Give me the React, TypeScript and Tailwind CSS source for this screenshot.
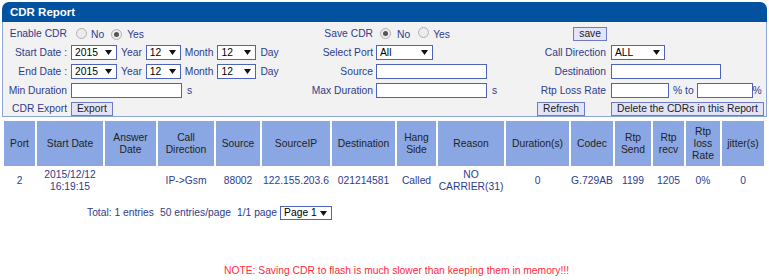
import React from "react";

const Arrow = () => (
    <svg width="7" height="5" viewBox="0 0 7 5" className="shrink-0">
        <path d="M0 0 L7 0 L3.5 5 Z" fill="#111" />
    </svg>
);

const Select = ({ value, className }: { value: string; className: string }) => (
    <div
        className={
            "inline-flex h-[15px] items-center justify-between border border-[#4f63b8] bg-white pl-[3px] pr-[4px] text-black " +
            className
        }
    >
        <span>{value}</span>
        <Arrow />
    </div>
);

const Input = ({ className }: { className: string }) => (
    <div className={"h-[15px] border border-[#4f63b8] bg-white " + className} />
);

const Radio = ({ checked }: { checked?: boolean }) => (
    <span className="inline-flex h-[11px] w-[11px] items-center justify-center rounded-full border border-[#b0b0b0] bg-[#ececec]">
        {checked && <span className="h-[5px] w-[5px] rounded-full bg-[#555]" />}
    </span>
);

const Button = ({ label, className }: { label: string; className?: string }) => (
    <div
        className={
            "inline-flex h-[14px] items-center justify-center border border-[#6b7cc4] bg-[#e4e4f8] px-[5px] text-[#222] " +
            (className ?? "")
        }
    >
        {label}
    </div>
);

const columns = [
    { title: "Port", w: "w-[31px]" },
    { title: "Start Date", w: "w-[66px]" },
    { title: "Answer Date", w: "w-[51px]" },
    { title: "Call Direction", w: "w-[56px]" },
    { title: "Source", w: "w-[44px]" },
    { title: "SourceIP", w: "w-[68px]" },
    { title: "Destination", w: "w-[63px]" },
    { title: "Hang Side", w: "w-[39px]" },
    { title: "Reason", w: "w-[66px]" },
    { title: "Duration(s)", w: "w-[63px]" },
    { title: "Codec", w: "w-[42px]" },
    { title: "Rtp Send", w: "w-[36px]" },
    { title: "Rtp recv", w: "w-[31px]" },
    { title: "Rtp loss Rate", w: "w-[34px]" },
    { title: "jitter(s)", w: "w-[42px]" },
];

const row = [
    "2",
    "2015/12/12 16:19:15",
    "",
    "IP->Gsm",
    "88002",
    "122.155.203.6",
    "021214581",
    "Called",
    "NO CARRIER(31)",
    "0",
    "G.729AB",
    "1199",
    "1205",
    "0%",
    "0",
];

export default function App() {
    return (
        <div className="h-[280px] w-[769px] bg-white font-['Liberation_Sans',Arial,sans-serif] text-[10.3px] leading-[12px] text-[#2d3c8e]">
            {/* Filter panel */}
            <div className="ml-[2px] w-[765px] pt-[2px]">
                <div className="flex h-[20px] items-center rounded-t-[7px] bg-[#0252a0] pl-[8px] text-[11.5px] font-bold text-white">
                    CDR Report
                </div>
                <div className="h-[95px] border border-t-0 border-[#8ea6d8] bg-[#f2f2f2] pt-[2px]">
                    {/* Row 1 */}
                    <div className="flex h-[19px] items-center">
                        <div className="w-[67px] pr-[3px] text-right">Enable CDR</div>
                        <div className="flex w-[230px] items-center pl-[6px]">
                            <Radio />
                            <span className="ml-[4px] mt-[3px]">No</span>
                            <span className="ml-[7px]">
                                <Radio checked />
                            </span>
                            <span className="ml-[5px] mt-[3px]">Yes</span>
                        </div>
                        <div className="w-[76px] pr-[3px] text-right">Save CDR</div>
                        <div className="flex w-[144px] items-center pl-[4px]">
                            <Radio checked />
                            <span className="ml-[6px] mt-[3px]">No</span>
                            <span className="ml-[8px]">
                                <Radio />
                            </span>
                            <span className="ml-[4px] mt-[3px]">Yes</span>
                        </div>
                        <div className="flex w-[90px] justify-end pr-[3px]">
                            <Button label="save" className="h-[13px]" />
                        </div>
                        <div className="flex-1" />
                    </div>

                    {/* Row 2 */}
                    <div className="flex h-[19px] items-center">
                        <div className="w-[67px] pr-[3px] text-right">Start Date :</div>
                        <div className="flex w-[230px] items-center gap-[4px] pl-[1px]">
                            <Select value="2015" className="w-[46px]" />
                            <span>Year</span>
                            <Select value="12" className="w-[35px]" />
                            <span>Month</span>
                            <Select value="12" className="w-[39px]" />
                            <span>Day</span>
                        </div>
                        <div className="w-[76px] pr-[3px] text-right">Select Port</div>
                        <div className="flex w-[144px] items-center">
                            <Select value="All" className="w-[57px]" />
                        </div>
                        <div className="w-[90px] pr-[4px] text-right">Call Direction</div>
                        <div className="flex flex-1 items-center pl-[1px]">
                            <Select value="ALL" className="w-[54px]" />
                        </div>
                    </div>

                    {/* Row 3 */}
                    <div className="flex h-[19px] items-center">
                        <div className="w-[67px] pr-[3px] text-right">End Date :</div>
                        <div className="flex w-[230px] items-center gap-[4px] pl-[1px]">
                            <Select value="2015" className="w-[46px]" />
                            <span>Year</span>
                            <Select value="12" className="w-[35px]" />
                            <span>Month</span>
                            <Select value="12" className="w-[39px]" />
                            <span>Day</span>
                        </div>
                        <div className="w-[76px] pr-[3px] text-right">Source</div>
                        <div className="flex w-[144px] items-center">
                            <Input className="w-[111px]" />
                        </div>
                        <div className="w-[90px] pr-[4px] text-right">Destination</div>
                        <div className="flex flex-1 items-center pl-[1px]">
                            <Input className="w-[110px]" />
                        </div>
                    </div>

                    {/* Row 4 */}
                    <div className="flex h-[19px] items-center">
                        <div className="w-[67px] pr-[3px] text-right">Min Duration</div>
                        <div className="flex w-[230px] items-center gap-[5px] pl-[1px]">
                            <Input className="w-[111px]" />
                            <span>s</span>
                        </div>
                        <div className="w-[76px] pr-[3px] text-right">Max Duration</div>
                        <div className="flex w-[144px] items-center gap-[5px]">
                            <Input className="w-[111px]" />
                            <span>s</span>
                        </div>
                        <div className="w-[90px] pr-[4px] text-right">Rtp Loss Rate</div>
                        <div className="flex flex-1 items-center pl-[1px]">
                            <Input className="w-[58px]" />
                            <span className="ml-[4px] mr-[3px]">% to</span>
                            <Input className="w-[56px]" />
                            <span>%</span>
                        </div>
                    </div>

                    {/* Row 5 */}
                    <div className="flex h-[17px] items-center">
                        <div className="w-[67px] pr-[3px] text-right">CDR Export</div>
                        <div className="flex w-[230px] items-center pl-[1px]">
                            <Button label="Export" />
                        </div>
                        <div className="w-[76px]" />
                        <div className="w-[144px]" />
                        <div className="flex w-[90px] items-center pl-[17px]">
                            <Button label="Refresh" className="h-[13px] w-[48px]" />
                        </div>
                        <div className="flex flex-1 items-center pl-[1px]">
                            <Button label="Delete the CDRs in this Report" className="w-[153px]" />
                        </div>
                    </div>
                </div>
            </div>

            {/* Result table */}
            <table className="ml-[2px] mt-[2px] w-[764px] table-fixed border-separate border-spacing-[2px]">
                <thead>
                    <tr>
                        {columns.map((c) => (
                            <th
                                key={c.title}
                                className={
                                    "h-[45px] bg-[#8aa7e3] p-0 text-center align-middle font-normal text-[#222] " + c.w
                                }
                            >
                                {c.title}
                            </th>
                        ))}
                    </tr>
                </thead>
                <tbody>
                    <tr>
                        {row.map((v, i) => (
                            <td key={i} className="h-[26px] p-0 text-center align-middle">
                                {i === 10 ? <span className="whitespace-nowrap">{v}</span> : v}
                            </td>
                        ))}
                    </tr>
                </tbody>
            </table>

            {/* Paging */}
            <div className="mt-[10px] flex h-[14px] items-center pl-[87px]">
                <span>Total: 1 entries</span>
                <span className="ml-[6px]">50 entries/page</span>
                <span className="ml-[6px]">1/1 page</span>
                <div className="ml-[3px] inline-flex h-[14px] w-[52px] items-center justify-between border border-[#4f63b8] bg-white pl-[3px] pr-[4px] text-black">
                    <span>Page 1</span>
                    <Arrow />
                </div>
            </div>

            <div className="mt-[45px] pl-[24px] text-center text-[#ff2a3a]">
                NOTE: Saving CDR to flash is much slower than keeping them in memory!!!
            </div>
        </div>
    );
}
